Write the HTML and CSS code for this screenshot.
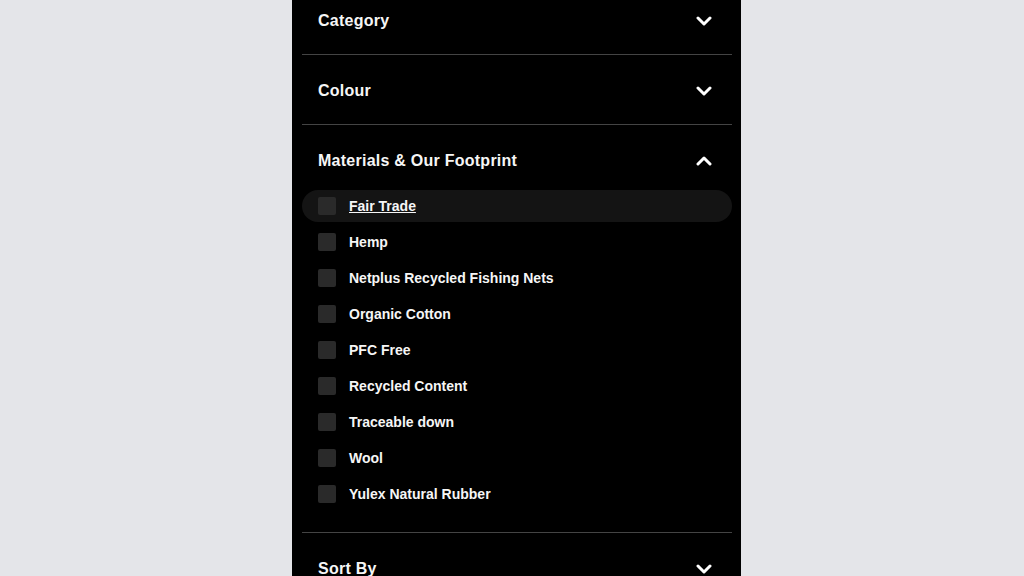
FILE: index.html
```html
<!DOCTYPE html>
<html lang="en">
<head>
    <meta charset="UTF-8">
    <meta name="viewport" content="width=device-width, initial-scale=1.0">
    <title>Filters</title>
    <link rel="stylesheet" href="styles.css">
</head>
<body>
    <div class="filters">
        <div class="section">
            <div class="section-head">
                <span>Category</span>
                <svg class="chevron" viewBox="0 0 16 10" width="16" height="10"><path d="M2 2 L8 8 L14 2" /></svg>
            </div>
        </div>
        <div class="section">
            <div class="section-head">
                <span>Colour</span>
                <svg class="chevron" viewBox="0 0 16 10" width="16" height="10"><path d="M2 2 L8 8 L14 2" /></svg>
            </div>
        </div>
        <div class="section open">
            <div class="section-head">
                <span>Materials &amp; Our Footprint</span>
                <svg class="chevron" viewBox="0 0 16 10" width="16" height="10"><path d="M2 8 L8 2 L14 8" /></svg>
            </div>
            <ul class="options">
                <li class="option hover"><span class="box"></span><span class="label">Fair Trade</span></li>
                <li class="option"><span class="box"></span><span class="label">Hemp</span></li>
                <li class="option"><span class="box"></span><span class="label">Netplus Recycled Fishing Nets</span></li>
                <li class="option"><span class="box"></span><span class="label">Organic Cotton</span></li>
                <li class="option"><span class="box"></span><span class="label">PFC Free</span></li>
                <li class="option"><span class="box"></span><span class="label">Recycled Content</span></li>
                <li class="option"><span class="box"></span><span class="label">Traceable down</span></li>
                <li class="option"><span class="box"></span><span class="label">Wool</span></li>
                <li class="option"><span class="box"></span><span class="label">Yulex Natural Rubber</span></li>
            </ul>
        </div>
        <div class="section">
            <div class="section-head">
                <span>Sort By</span>
                <svg class="chevron" viewBox="0 0 16 10" width="16" height="10"><path d="M2 2 L8 8 L14 2" /></svg>
            </div>
        </div>
    </div>
</body>
</html>
```

FILE: styles.css
```css
html, body
{
    margin: 0;
    height: 100%;
    overflow: hidden;
}
body
{
    background: #e4e5e9;
    font-family: "Liberation Sans", Arial, sans-serif;
    color: #f6f6f6;
}
.filters
{
    width: 449px;
    height: 600px;
    margin-left: 292px;
    margin-top: -15px;
    background: #000;
    padding: 0 9px 0 10px;
    box-sizing: border-box;
    overflow: hidden;
}
.section
{
    border-bottom: 1px solid #444;
}
.section-head
{
    height: 69px;
    box-sizing: border-box;
    display: flex;
    align-items: center;
    justify-content: space-between;
    padding: 2px 20px 0 16px;
    font-size: 16px;
    font-weight: bold;
    letter-spacing: 0.25px;
}
.chevron
{
    fill: none;
    stroke: #fff;
    stroke-width: 3;
    stroke-linecap: round;
    stroke-linejoin: round;
}
.open .section-head
{
    height: 70px;
    margin-bottom: -5px;
}
.options
{
    list-style: none;
    margin: 0;
    padding: 0 0 22px 0;
    display: flex;
    flex-direction: column;
    gap: 4px;
}
.option
{
    height: 32px;
    display: flex;
    align-items: center;
    gap: 13px;
    padding-left: 16px;
    border-radius: 16px;
    font-size: 14px;
    font-weight: bold;
}
.option.hover
{
    background: #141414;
}
.option.hover .label
{
    text-decoration: underline;
}
.box
{
    width: 18px;
    height: 18px;
    background: #2a2a2a;
    border-radius: 2px;
}
```
